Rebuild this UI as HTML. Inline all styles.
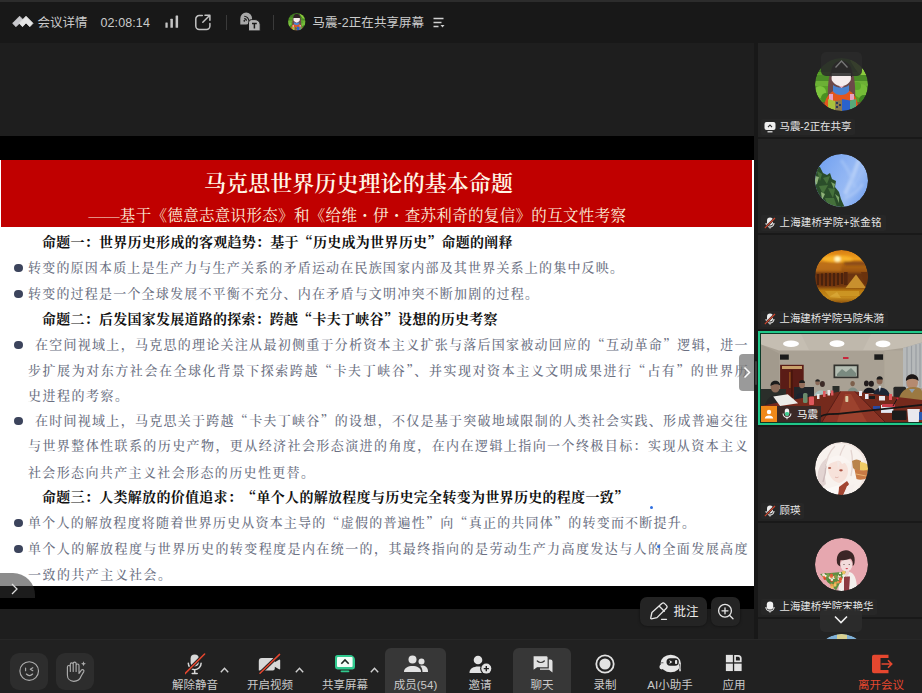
<!DOCTYPE html>
<html lang="zh-CN">
<head>
<meta charset="utf-8">
<title>腾讯会议</title>
<style>
*{box-sizing:border-box;margin:0;padding:0}
html,body{width:922px;height:693px;overflow:hidden;background:#181818}
body{position:relative;font-family:"Liberation Sans","Noto Sans CJK SC",sans-serif;color:#d2d2d2;font-size:12.5px}
.abs{position:absolute}
#topbar{left:0;top:0;width:922px;height:43px;background:#181818;border-top:2px solid #2c2c2c}
#topbar .t{position:absolute;top:12px;line-height:18px;font-size:12.5px;color:#cbcbcb;white-space:nowrap}
.sep{position:absolute;width:1px;background:#3a3a3a;top:13px;height:15px}
#stage{left:0;top:43px;width:754px;height:596px;background:#1e1e1e}
#blk{left:0;top:136px;width:754px;height:473px;background:#000}
#slide{left:0;top:160px;width:754px;height:426px;background:#fff;overflow:hidden}
#hdr{left:1px;top:0;width:750.500px;height:66.500px;background:#c00000}
.sl{position:absolute;white-space:nowrap;font-family:"Liberation Serif","Noto Serif CJK SC",serif;text-align:justify;text-align-last:justify;text-justify:inter-character}
.q{font-family:"Noto Serif CJK SC","Liberation Serif",serif;line-height:0}
.md{display:inline-block;width:1em;text-align:center;text-align-last:center;font-weight:900}
.h{font-weight:700;color:#111;font-size:14px;line-height:20px}
.b{font-weight:500;color:#6b7082;font-size:13px;line-height:20px}
.dot{position:absolute;width:8.400px;height:8.400px;border-radius:50%;background:#3c445c;left:14.200px}
#side{left:758px;top:43px;width:164px;height:596px;background:#191919;overflow:hidden}
.tile{position:absolute;left:0;width:164px;height:94px;background:#232323}
.av{position:absolute;left:57px;top:15px;width:53px;height:53px;border-radius:50%;overflow:hidden}
.nm{position:absolute;left:3px;top:76px;height:16px;background:#272727;border-radius:2px;font-size:10.450px;line-height:16px;color:#e6e6e6;padding:0 4px 0 18.500px;white-space:nowrap}
.nm svg{position:absolute;left:3px;top:2px}
#bar{left:0;top:639px;width:922px;height:54px;background:#212121;border-top:1px solid #272727}
.btn{position:absolute;top:12.5px;width:37.5px;height:37px;border-radius:9px;background:#2d2d2d}
.it{position:absolute;top:0;height:54px}
.it .lb{position:absolute;left:50%;transform:translateX(-50%);top:36.700px;font-size:11.5px;line-height:16px;color:#cacaca;white-space:nowrap}
.it svg{position:absolute}
.hl{position:absolute;top:8px;height:50px;border-radius:6px;background:#373737}
</style>
</head>
<body>
<div id="topbar" class="abs">
  <svg class="abs" style="left:12px;top:13px" width="22" height="13" viewBox="0 0 22 13" stroke-linejoin="round"><path d="M7.600 1.200L11 4.700L4 11.700L0.600 8.300Z" fill="#c9c9cd" stroke="#c9c9cd" stroke-width=".8"/><path d="M14 1.200L21 8.300L17.800 11.700L14 7.900L10.500 11.700L7.200 8.300Z" fill="#e6e6e6" stroke="#e6e6e6" stroke-width=".8"/></svg>
  <div class="t" style="left:37.500px">会议详情</div>
  <div class="t" style="left:100.500px;letter-spacing:.1px">02:08:14</div>
  <svg class="abs" style="left:165px;top:13px" width="15" height="14" viewBox="0 0 15 14"><rect x="0.400" y="7.400" width="2.300" height="5.400" rx=".5" fill="#c4c4c4"/><rect x="5.400" y="3.700" width="2.500" height="9.100" rx=".5" fill="#c4c4c4"/><rect x="10.600" y="0.500" width="2.500" height="12.300" rx=".5" fill="#c4c4c4"/></svg>
  <svg class="abs" style="left:194px;top:12px" width="18" height="17" viewBox="0 0 18 17" fill="none" stroke="#c2c2c2" stroke-width="1.500" stroke-linecap="round" stroke-linejoin="round"><path d="M8.300 1.600H5.200A3.400 3.400 0 0 0 1.800 5v7a3.400 3.400 0 0 0 3.400 3.400h7.300A3.400 3.400 0 0 0 15.900 12V9.500"/><path d="M8.800 8.300L15.800 1.300M11 1.200h4.900V6.200"/></svg>
  <div class="sep" style="left:226px"></div>
  <svg class="abs" style="left:240px;top:10px" width="21" height="20" viewBox="0 0 21 20"><path d="M0.300 12.400V6.500a5.900 5.900 0 1 1 5.900 5.900z" fill="#a9a9a9"/><path d="M4.200 6.600a2.200 2.200 0 0 1 2.200 2.200M4.200 4.200a4.600 4.600 0 0 1 4.600 4.600" stroke="#181818" stroke-width="1.100" fill="none"/><circle cx="4.300" cy="8.800" r="0.900" fill="#181818"/><path d="M8.500 18.900V10.600a3 3 0 0 1 3-3h3.500a5.200 5.200 0 0 1 5.200 5.200V18.900z" fill="#b2b2b2" stroke="#181818" stroke-width="1"/><path d="M12 11.500h4.800M14.400 11.500v5" stroke="#181818" stroke-width="1.500"/></svg>
  <div class="sep" style="left:273px"></div>
  <svg class="abs" style="left:288px;top:11.200px" width="17.500" height="17.500" viewBox="0 0 53 53"><use href="#av1"/></svg>
  <div class="t" style="left:312.500px;letter-spacing:.05px">马震-2正在共享屏幕</div>
  <svg class="abs" style="left:433px;top:15px" width="12" height="11" viewBox="0 0 12 11"><path d="M0.500 1.500h10M0.500 5.500h8M0.500 9.500h5" stroke="#d0d0d0" stroke-width="1.400"/><path d="M7.500 8l2 2.500l2-2.500z" fill="#d0d0d0"/></svg>
</div>

<div id="stage" class="abs"></div>
<div id="blk" class="abs"></div>
<div id="slide" class="abs">
  <div id="hdr" class="abs"></div>
  <div class="sl" style="left:204px;top:8.800px;width:309px;font-size:22px;line-height:30px;font-weight:600;color:#fff6e6">马克思世界历史理论的基本命题</div>
  <div class="sl" style="left:88.500px;top:45px;width:537.500px;font-size:15.500px;line-height:21px;color:#fdf0dc">——基于《德意志意识形态》和《给维<span class="q md">·</span>伊<span class="q md">·</span>查苏利奇的复信》的互文性考察</div>
  <div class="sl h" style="left:42px;top:72.6px;width:470.500px">命题一：世界历史形成的客观趋势：基于<span class="q">“</span>历史成为世界历史<span class="q">”</span>命题的阐释</div>
  <div class="sl b" style="left:28px;top:98px;width:595px">转变的原因本质上是生产力与生产关系的矛盾运动在民族国家内部及其世界关系上的集中反映。</div>
  <div class="dot" style="top:104px"></div>
  <div class="sl b" style="left:28px;top:124px;width:510px">转变的过程是一个全球发展不平衡不充分、内在矛盾与文明冲突不断加剧的过程。</div>
  <div class="dot" style="top:130px"></div>
  <div class="sl h" style="left:42px;top:149.6px;width:455.5px">命题二：后发国家发展道路的探索：跨越<span class="q">“</span>卡夫丁峡谷<span class="q">”</span>设想的历史考察</div>
  <div class="sl b" style="left:35px;top:174.5px;width:712.5px">在空间视域上，马克思的理论关注从最初侧重于分析资本主义扩张与落后国家被动回应的<span class="q">“</span>互动革命<span class="q">”</span>逻辑，进一</div>
  <div class="dot" style="top:180.5px"></div>
  <div class="sl b" style="left:28px;top:200.5px;width:719.5px">步扩展为对东方社会在全球化背景下探索跨越<span class="q">“</span>卡夫丁峡谷<span class="q">”</span>、并实现对资本主义文明成果进行<span class="q">“</span>占有<span class="q">”</span>的世界历</div>
  <div class="sl b" style="left:28px;top:225.5px;width:100px">史进程的考察。</div>
  <div class="sl b" style="left:35px;top:251px;width:712.5px">在时间视域上，马克思关于跨越<span class="q">“</span>卡夫丁峡谷<span class="q">”</span>的设想，不仅是基于突破地域限制的人类社会实践、形成普遍交往</div>
  <div class="dot" style="top:257px"></div>
  <div class="sl b" style="left:28px;top:276px;width:719.5px">与世界整体性联系的历史产物，更从经济社会形态演进的角度，在内在逻辑上指向一个终极目标：实现从资本主义</div>
  <div class="sl b" style="left:28px;top:302.5px;width:286px">社会形态向共产主义社会形态的历史性更替。</div>
  <div class="sl h" style="left:42px;top:328.1px;width:586px">命题三：人类解放的价值追求：<span class="q">“</span>单个人的解放程度与历史完全转变为世界历史的程度一致<span class="q">”</span></div>
  <div class="sl b" style="left:28px;top:353px;width:667px">单个人的解放程度将随着世界历史从资本主导的<span class="q">“</span>虚假的普遍性<span class="q">”</span>向<span class="q">“</span>真正的共同体<span class="q">”</span>的转变而不断提升。</div>
  <div class="dot" style="top:359px"></div>
  <div class="sl b" style="left:28px;top:378.5px;width:719.5px">单个人的解放程度与世界历史的转变程度是内在统一的，其最终指向的是劳动生产力高度发达与人的全面发展高度</div>
  <div class="dot" style="top:384.5px"></div>
  <div class="sl b" style="left:28px;top:404.5px;width:143px">一致的共产主义社会。</div>

  <div class="abs" style="left:739px;top:194px;width:15px;height:37px;border-radius:4px 0 0 4px;background:rgba(120,120,120,.75)"><svg class="abs" style="left:4px;top:12px" width="8" height="13" viewBox="0 0 8 13" fill="none" stroke="#fff" stroke-width="1.500"><path d="M1.500 1.500L6.500 6.500L1.500 11.500"/></svg></div>
</div>
<div class="abs" style="left:0;top:572.500px;width:35px;height:25px;border-radius:0 22px 0 0;background:rgba(50,50,50,.56)"><svg class="abs" style="left:11px;top:10px" width="7" height="12" viewBox="0 0 7 12" fill="none" stroke="#ddd" stroke-width="1.300"><path d="M1 1L6 6L1 11"/></svg></div>

<div class="abs" style="left:640px;top:597px;width:66.500px;height:29px;border-radius:7px;background:#242424;box-shadow:0 0 3px rgba(0,0,0,.5)"><svg class="abs" style="left:9px;top:5px" width="20" height="19" viewBox="0 0 20 19" fill="none" stroke="#e6e6e6" stroke-width="1.300" stroke-linejoin="round" stroke-linecap="round"><path d="M12.800 1.600a2 2 0 0 1 2.800 0l1.800 1.800a2 2 0 0 1 0 2.800L8 15.600l-5.600 1.200a.6.600 0 0 1-.7-.7L2.900 10.500z"/><path d="M10.300 4.200l5 5"/><path d="M12.500 17.300h5"/></svg><div class="abs" style="left:33.500px;top:6px;font-size:12.500px;line-height:18px;color:#eaeaea;white-space:nowrap">批注</div></div>
<div class="abs" style="left:711px;top:597px;width:29px;height:29px;border-radius:7px;background:#242424;box-shadow:0 0 3px rgba(0,0,0,.5)"><svg class="abs" style="left:5px;top:5px" width="20" height="20" viewBox="0 0 20 20" fill="none" stroke="#e6e6e6" stroke-width="1.300" stroke-linecap="round"><circle cx="9" cy="8.800" r="6.400"/><path d="M13.700 13.500l3.300 3.300M6 8.800h6M9 5.800v6"/></svg></div>
<div class="abs" style="left:755px;top:361px;width:2px;height:24px;border-radius:1px;background:#3c3c3c"></div>
<div class="abs" style="left:650px;top:506px;width:3px;height:3px;border-radius:50%;background:#2f6fe0"></div>
<div class="abs" style="left:657px;top:545px;width:3px;height:3px;border-radius:50%;background:#2f6fe0"></div>
<div id="side" class="abs">
  <svg width="0" height="0" style="position:absolute"><defs>
    <clipPath id="cc"><circle cx="26.500" cy="26.500" r="26.500"/></clipPath>
    <filter id="b1" x="-10%" y="-10%" width="120%" height="120%"><feGaussianBlur stdDeviation="0.750"/></filter>
    <filter id="b2" x="-10%" y="-10%" width="120%" height="120%"><feGaussianBlur stdDeviation="1.200"/></filter>
    <filter id="b3" x="-20%" y="-20%" width="140%" height="140%"><feGaussianBlur stdDeviation="2.500"/></filter>
    <symbol id="av1" viewBox="0 0 53 53"><g clip-path="url(#cc)"><g filter="url(#b1)">
      <rect width="53" height="53" fill="#58a028"/>
      <rect x="0" y="0" width="53" height="14" fill="#3f7a20"/>
      <path d="M34 0h19v22c-6-2-12-8-19-22z" fill="#8ccc3c"/>
      <rect x="0" y="17" width="53" height="6" fill="#4c8c26"/>
      <rect x="0" y="23" width="53" height="5" fill="#6cb034"/>
      <circle cx="5" cy="34" r="6" fill="#7cc43c"/><circle cx="11" cy="40" r="5" fill="#4a9022"/><circle cx="46" cy="33" r="7" fill="#74bc38"/><circle cx="49" cy="42" r="5" fill="#3f8420"/><circle cx="42" cy="28" r="4" fill="#5ca82c"/>
      <path d="M0 44h53v9H0z" fill="#6a5a30"/>
      <path d="M13 42C12 22 15 3 26.500 3s14.500 19 13.500 39z" fill="#6c4a4a"/>
      <path d="M16 19C15 8 20 3 26.500 3S38 8 37 19z" fill="#2e2226"/>
      <path d="M16.600 15h19.300v6c0 3-5 7-9.600 7.400c-4.600-.4-9.700-4.400-9.700-7.400z" fill="#f6ecec"/>
      <path d="M8.500 53C9 40 15 31 26.500 31S43 40 43.500 53z" fill="#e2571f"/>
      <path d="M14 36h4v7h-4zM35 36h4v6h-4z" fill="#e8a2c2"/>
      <path d="M18 27c3 2 5 2.500 8 2.500s6-.500 8-2.500v6.500c-2 2.500-5 3.500-8 3.500s-6-1-8-3.500z" fill="#4a82d0"/>
      <path d="M24 28h5l-2.500 2z" fill="#f0b8c8"/>
      <path d="M13 41l7 2v10h-7z" fill="#a9c23e"/><path d="M20 43l7-1v11h-7z" fill="#8a7a50"/><path d="M27 41l8 1.500V53h-8z" fill="#2a62cc"/><path d="M35 42.500l6-1.500v9l-6 2z" fill="#58a878"/>
      <path d="M21 44h2v2h-2zM24 46h2v2h-2zM21 48h2v2h-2z" fill="#2a3a5a"/>
    </g></g></symbol>
    <symbol id="micoff" viewBox="0 0 12 12"><rect x="3" y="0.600" width="6" height="7.800" rx="3" fill="#ececec"/><path d="M2 6a4 4 0 0 0 8 0M6 10v1.500" stroke="#ececec" stroke-width="1.100" fill="none"/><path d="M0.800 11.200L11 1" stroke="#282828" stroke-width="2.200"/><path d="M0.800 11.200L11 1" stroke="#d2452c" stroke-width="1.100"/></symbol>
    <symbol id="micon" viewBox="0 0 12 12"><rect x="2.800" y="0.400" width="6.400" height="8.200" rx="3.200" fill="#f2f2f2"/><path d="M1.900 6a4.100 4.100 0 0 0 8.200 0M6 10v1.600" stroke="#f2f2f2" stroke-width="1.100" fill="none"/></symbol>
  </defs></svg>

  <!-- tile 1 -->
  <div class="tile" style="top:0">
    <svg class="av" viewBox="0 0 53 53"><use href="#av1"/></svg>
    <div class="abs" style="left:63px;top:9px;width:41px;height:24px;border-radius:5px;background:rgba(42,42,42,.88)"><svg class="abs" style="left:14px;top:8px" width="13" height="8" viewBox="0 0 13 8" fill="none" stroke="#777" stroke-width="1.300"><path d="M0.500 7.500L6.500 1L12.500 7.500"/></svg></div>
    <div class="nm"><svg width="12" height="12" viewBox="0 0 12 12"><rect x="0.500" y="1" width="11" height="8" rx="2" fill="#f0f0f0"/><path d="M4 6.200L6 4l2 2.200" stroke="#2b2b2b" stroke-width="1.100" fill="none"/><path d="M3.500 10.800h5" stroke="#f0f0f0" stroke-width="1.200"/></svg>马震-2正在共享</div>
  </div>

  <!-- tile 2 -->
  <div class="tile" style="top:96px">
    <svg class="av" viewBox="0 0 53 53"><defs><linearGradient id="sky" x1="0" y1="0" x2="1" y2="0.600"><stop offset="0" stop-color="#6c9df0"/><stop offset="0.550" stop-color="#8fb4f3"/><stop offset="0.800" stop-color="#9cbdf4"/><stop offset="1" stop-color="#7fa9f0"/></linearGradient></defs><g clip-path="url(#cc)">
      <rect width="53" height="53" fill="url(#sky)"/>
      <g filter="url(#b2)"><path d="M44 6C40 18 36 28 30 40" stroke="#bcd3f8" stroke-width="4" fill="none" opacity=".75"/><path d="M26 6C32 14 36 20 40 34" stroke="#a8c6f6" stroke-width="3" fill="none" opacity=".6"/><path d="M30 44C36 42 42 38 48 30" stroke="#b4cef7" stroke-width="3" fill="none" opacity=".5"/></g>
      <g filter="url(#b1)"><path d="M-2 12L5 13L8 19L12 21L15 19L17 25L21 27L20 33L24 38L26 45L30 54L-2 54Z" fill="#2c4e2a"/>
      <g filter="url(#b1)" opacity=".8"><path d="M2 17L7 20L5 27zM8 24l7-2l-3 8zM4 32l9-1l-5 9zM13 34l7 1l-2 9zM10 44l9 0l3 9h-9z" fill="#4c7a40"/></g><path d="M0 22l4 1l-2 7l-2 1zM6 38l4 2l-3 6z" fill="#8fb27a"/><path d="M16 28l4 2l-1 5zM20 40l4 3l0 6z" fill="#7aa468"/></g>
    </g></svg>
    <div class="nm" style="letter-spacing:.2px"><svg width="12" height="12"><use href="#micoff"/></svg>上海建桥学院+张金铭</div>
  </div>

  <!-- tile 3 -->
  <div class="tile" style="top:192px">
    <svg class="av" viewBox="0 0 53 53"><defs><linearGradient id="sun" x1="0" y1="0" x2="0" y2="1"><stop offset="0" stop-color="#d67c14"/><stop offset="0.170" stop-color="#f0a01c"/><stop offset="0.260" stop-color="#b86a14"/><stop offset="0.400" stop-color="#9a5410"/><stop offset="0.460" stop-color="#6a3410"/><stop offset="0.680" stop-color="#74380e"/><stop offset="0.760" stop-color="#b8780f"/><stop offset="0.900" stop-color="#c48a1c"/><stop offset="1" stop-color="#8e520c"/></linearGradient></defs><g clip-path="url(#cc)">
      <rect width="53" height="53" fill="url(#sun)"/>
      <g filter="url(#b2)"><ellipse cx="22.500" cy="9" rx="15" ry="3.200" fill="#f8b42c"/><circle cx="22.500" cy="9" r="3" fill="#fff6c0"/><path d="M28 11.500h25v4H30z" fill="#8a4c12"/><path d="M0 13h26v8H0z" fill="#c07418" opacity=".7"/></g>
      <g filter="url(#b1)"><path d="M3 24v11M7 23.500v12M11 23v13M15 23v13M19 23v13M23 23v12M27 23v11" stroke="#4a200c" stroke-width="2.200"/><path d="M30.500 38L41 24.500L51 38Z" fill="#c8902e"/><rect x="29" y="22" width="3.600" height="13" fill="#54280e"/><path d="M46 22h7v12h-4z" fill="#6a300e"/><path d="M10 41h34v5H14z" fill="#d09a28" opacity=".8"/><path d="M14 47l8-5l4 6z" fill="#e0b040" opacity=".6"/></g>
    </g></svg>
    <div class="nm"><svg width="12" height="12"><use href="#micoff"/></svg>上海建桥学院马院朱漪</div>
  </div>

  <!-- tile 4 video -->
  <div class="tile" style="top:288px;background:#20c789">
    <div class="abs" style="left:2px;top:2px;right:0;bottom:2px;background:#0c3a28"></div>
    <svg class="abs" style="left:3px;top:3px" width="161" height="88" viewBox="0 0 161 88"><g filter="url(#b1)">
      <rect width="161" height="88" fill="#a9a194"/>
      <path d="M0 0H161V8.500L142 14L123 16.500H18L0 10.400Z" fill="#c5beb2"/>
      <path d="M40 0h70l-8 16H48z" fill="#bbb4a8" opacity=".6"/>
      <path d="M0 10.400L18 19.400V62H0Z" fill="#a29a8d"/>
      <rect x="123.400" y="16.500" width="18.600" height="46" fill="#b1a99b"/>
      <path d="M142 14L161 8.500V54H142Z" fill="#b6b9ba"/>
      <path d="M146 13v40M150.500 12v41M155 10.500v43M159 9.500v44" stroke="#9a9ea2" stroke-width="1.200"/>
      <ellipse cx="30" cy="9.700" rx="8" ry="3.200" fill="#fff"/><ellipse cx="76" cy="9.700" rx="7.500" ry="3.400" fill="#fff"/><ellipse cx="122" cy="9.900" rx="7.500" ry="3.400" fill="#fff"/>
      <rect x="19" y="20.500" width="8.800" height="5.200" fill="#1e1f1c"/><rect x="113.300" y="20.300" width="8.800" height="5.500" fill="#1e1f1c"/><rect x="82" y="23" width="5.500" height="2" fill="#c8283a"/>
      <rect x="19.100" y="30.800" width="23.600" height="34" fill="#5a1d14"/><rect x="21" y="32" width="20" height="3" fill="#c9a06a"/><rect x="30.400" y="36" width="1" height="28" fill="#3a0f09"/><rect x="28" y="38" width="1.600" height="16" fill="#8a4a1e"/>
      <rect x="72.500" y="30.500" width="25" height="13.700" fill="#33332e"/><rect x="74.200" y="32.200" width="21.600" height="10.300" fill="#b4bdb2"/><path d="M76 40l5-5l4 3l5-4l5 5v3H76z" fill="#7a8a80"/>
      <!-- chairs / people left -->
      <path d="M0 55h25v22H0z" fill="#2b2f2b"/>
      <path d="M33 53h20v13H33z" fill="#24282a"/>
      <ellipse cx="14.300" cy="53" rx="4.600" ry="5.600" fill="#8a6a58"/><path d="M9.500 52c-.5-7 10-7 9.600-.5c-2-1.500-6-2-9.600.5z" fill="#1a1a1a"/>
      <path d="M3 76c1-12 8-15 13-15s9 4 11 10l-8 8H3z" fill="#262626"/>
      <ellipse cx="41" cy="50.500" rx="3" ry="3.800" fill="#94705c"/><path d="M38 49c0-4 6-4 6 0z" fill="#1c1c1c"/><path d="M34 66c1-10 13-10 15 0z" fill="#1c222e"/>
      <ellipse cx="56.600" cy="48.500" rx="2.300" ry="2.800" fill="#8a6a58"/><path d="M54.300 47.500c0-3 4.600-3 4.600 0z" fill="#222"/>
      <ellipse cx="61.400" cy="50" rx="2.500" ry="3" fill="#3a2c28"/>
      <path d="M53 64c0-10 14-10 14 0z" fill="#a9c1bf"/>
      <rect x="71.500" y="52" width="7" height="7" fill="#2a2d2a"/>
      <ellipse cx="91.600" cy="49.600" rx="2.200" ry="2.700" fill="#7c5e4c"/><path d="M86.500 58c1-6 9.500-6 10.500 0z" fill="#7f8f86"/>
      <ellipse cx="105.400" cy="49.400" rx="2.400" ry="2.800" fill="#221c1c"/><ellipse cx="110.300" cy="49.800" rx="2.600" ry="3" fill="#221c1c"/><path d="M102 59c1-7 11-7 13 0z" fill="#17171a"/>
      <ellipse cx="118.600" cy="46.800" rx="3" ry="3.800" fill="#8a6652"/><path d="M115.500 45.500c0-4.500 6.400-4.500 6.400 0z" fill="#1a1a1a"/><path d="M112 62c1-11 15-11 17 0z" fill="#1e2636"/><path d="M117.500 52l1.300 6l1.300-6z" fill="#cdd6e0"/>
      <rect x="132.400" y="52.800" width="12.600" height="12" rx="1.500" fill="#262826"/>
      <ellipse cx="151.200" cy="48.500" rx="5.800" ry="6.800" fill="#b58a70"/><path d="M145 47c-1-9 13-9 12.500 0c-3-3-9-3-12.500 0z" fill="#1d1714"/>
      <path d="M137 70c1-14 10-17 16-17s8 3 8 5v12z" fill="#9b7942"/><path d="M148 55l3 4l3-4z" fill="#8fa0b0"/>
      <!-- tables -->
      <path d="M0 72L30 66L79.500 57.500H94L128 62L161 66V88H0Z" fill="#742a1e"/>
      <path d="M79.500 57.500H94L124 88H61Z" fill="#8c3525"/><path d="M84 60h6l16 28H76z" fill="#a04630" opacity=".8"/>
      <path d="M79.500 57.500L61 88" stroke="#5a1e16" stroke-width="1"/><path d="M94 57.500L124 88" stroke="#5a1e16" stroke-width="1"/>
      <path d="M12.200 62.400L26.800 60.300L37.100 69.300L19.100 72Z" fill="#ecece8"/>
      <rect x="42" y="59" width="4.500" height="10" rx="1.500" fill="#6b8c6c"/><rect x="48" y="62.400" width="5" height="8.600" rx="1" fill="#e0585c"/>
      <rect x="56" y="60" width="2.500" height="5" fill="#ece6e6"/><rect x="62" y="57" width="2.600" height="6" fill="#e05c60"/><rect x="66.500" y="56" width="2.500" height="5.500" fill="#ece6e6"/><rect x="70" y="56.500" width="2.400" height="5" fill="#dc5a5e"/>
      <rect x="84.300" y="62" width="3" height="6" rx=".8" fill="#d9cba4"/>
      <rect x="98" y="57" width="3" height="5" fill="#e6e8f0"/><rect x="104" y="60" width="3.500" height="5" fill="#e6e8f0"/><rect x="108" y="62" width="6" height="3" fill="#1c1c1e"/><rect x="118" y="62" width="6" height="4.500" fill="#e8e8ee"/><rect x="128" y="60" width="3" height="6" fill="#e4565a"/>
      <rect x="120" y="70.900" width="12.400" height="8" fill="#e4e8f2"/><rect x="121" y="70" width="13" height="3" fill="#c83c48"/><rect x="112" y="72" width="7" height="3" fill="#2a4aa0"/>
      <rect x="131" y="76.400" width="14.600" height="9.600" rx="1" fill="#1b1b1c"/><path d="M146.300 75h12.500l-1 13h-10.500z" fill="#e9e9ee"/><rect x="158" y="78" width="3" height="8" fill="#2a5ab0"/>
      <path d="M57 88C57 80 66 80 77 79.900L161 70.900" stroke="#161616" stroke-width="1.600" fill="none"/><path d="M132 72l4-7" stroke="#161616" stroke-width="1"/><circle cx="136.500" cy="64.500" r="1" fill="#d02040"/>
    </g></svg>
    <div class="abs" style="left:3px;top:75px;width:16px;height:16px;background:#f0891a"><svg class="abs" style="left:3px;top:3px" width="10" height="10" viewBox="0 0 10 10"><circle cx="5" cy="3" r="2.200" fill="#fff"/><path d="M0.800 9.500c0-4 8.400-4 8.400 0z" fill="#fff"/></svg></div>
    <div class="abs" style="left:19px;top:75px;width:44px;height:16px;background:rgba(46,42,40,.82);font-size:10.500px;line-height:16px;color:#f4f4f4;padding-left:20px;white-space:nowrap"><svg class="abs" style="left:4px;top:2px" width="12" height="12" viewBox="0 0 12 12"><rect x="3.800" y="0.600" width="4.400" height="7.200" rx="2.200" fill="#f2f2f2"/><rect x="3.800" y="4" width="4.400" height="3.800" rx="1.800" fill="#3ec98e"/><path d="M2.100 5.500a3.900 3.900 0 0 0 7.800 0M6 9.400v1.900" stroke="#f2f2f2" stroke-width="1.100" fill="none"/></svg>马震</div>
  </div>

  <!-- tile 5 -->
  <div class="tile" style="top:384px">
    <svg class="av" viewBox="0 0 53 53"><g clip-path="url(#cc)"><g filter="url(#b1)">
      <rect width="53" height="53" fill="#f1e5e0"/>
      <path d="M0 22C4 6 18 0 30 2s22 12 20 30L42 50H4Z" fill="#f8f2ee"/>
      <path d="M3 30c2-8 6-12 9-14c-2 8-3 16-1 26l-5 4c-3-5-4-10-3-16z" fill="#e2d4d2"/>
      <path d="M8 40c2-6 3-12 3-18" stroke="#cdbcbc" stroke-width="1.400" fill="none"/>
      <path d="M20 4c-6 6-9 14-9 22M30 3c-4 6-6 12-6 18M36 8c2 8 2 16 0 26" stroke="#e3d4d0" stroke-width="1.300" fill="none"/>
      <path d="M13 26c1-6 6-9 11-8s9 5 9 11c0 6-4 11-9 12c-6-1-11-8-11-15z" fill="#f7e2da"/>
      <path d="M11 24C14 12 28 9 36 22c-3-2-6-2-9 0c-1-3-3-4-5-3c-3 1-7 2-11 5z" fill="#faf5f2"/>
      <path d="M22 19l1 8l2-7z" fill="#f3e8e4"/>
      <ellipse cx="14.600" cy="26" rx="1.600" ry="1" fill="#b2604e"/><ellipse cx="26" cy="28.300" rx="1.800" ry="1.100" fill="#ac5444"/>
      <path d="M20 35c1 .8 2.500 .8 3.500 0" stroke="#d8a098" stroke-width=".7" fill="none"/>
      <path d="M37 19c3-2 6-2 9 0v9c-3 1-6 0-8-2z" fill="#b9844c"/><path d="M45 20c3 0 6 1 8 3v7c-3 0-6-1-8-2z" fill="#f0cc66"/><path d="M39.500 27c4 1 8 2 13 1v8c-4 2-8 2-11 1z" fill="#c97a44"/><path d="M41 32l10 2" stroke="#e8b070" stroke-width="1"/>
      <path d="M24 45l8-6l2 3l-6 11h-5z" fill="#a24530"/><path d="M8 48l16-5l-1 10H8z" fill="#fcf9f7"/><path d="M32 44l8-2l-4 10l-8 2z" fill="#f6efec"/>
    </g></g></svg>
    <div class="nm"><svg width="12" height="12"><use href="#micoff"/></svg>顾瑛</div>
  </div>

  <!-- tile 6 -->
  <div class="tile" style="top:480px">
    <svg class="av" viewBox="0 0 53 53"><g clip-path="url(#cc)"><g filter="url(#b1)">
      <rect width="53" height="53" fill="#e6a7af"/>
      <path d="M23.500 53C23.500 41 26 35 32 34s10 4 10 19z" fill="#f3efec"/><path d="M29 38.500h6l-1 14.500h-5z" fill="#8c3a42"/>
      <path d="M28.500 31h5.500v5l-2.700 2.500l-2.800-2.500z" fill="#efd2d0"/>
      <ellipse cx="31.400" cy="27" rx="6" ry="6.200" fill="#f3dcdc"/>
      <path d="M22 25C20.500 15 27 11.800 31.500 12.200s9.500 4.300 8 12.800c-.3 1.500-1 2.500-1.800 3c.5-4-.5-6.500-2.500-7.500c-3 1.500-6.500 2-9.500 1.500c-.8 2-.8 4-.3 6.500c-1.800-.8-3-2-3.400-3.500z" fill="#3a2826"/>
      <ellipse cx="31.800" cy="30.600" rx="1.300" ry="0.650" fill="#d04050"/><circle cx="29" cy="26.500" r=".55" fill="#4a3430"/><circle cx="34.200" cy="26.500" r=".55" fill="#4a3430"/>
      <path d="M5 36L31 33.500L21 52.500Z" fill="#5f8f42"/>
      <circle cx="12.7" cy="37.2" r="1.7" fill="#7aa04a"/><circle cx="10.0" cy="36.8" r="1.7" fill="#4f8436"/><circle cx="10.1" cy="39.0" r="1.1" fill="#f0c060"/><circle cx="23.9" cy="40.7" r="1.3" fill="#f2ead8"/><circle cx="25.1" cy="35.4" r="1.1" fill="#f4f0e4"/><circle cx="28.7" cy="37.5" r="1.5" fill="#f4f0e4"/><circle cx="18.7" cy="39.5" r="1.5" fill="#f2ead8"/><circle cx="19.0" cy="46.3" r="1.7" fill="#4f8436"/><circle cx="15.2" cy="39.5" r="1.5" fill="#f2ead8"/><circle cx="9.2" cy="38.8" r="1.5" fill="#e8743a"/><circle cx="13.8" cy="42.7" r="1.5" fill="#4f8436"/><circle cx="16.4" cy="42.4" r="1.5" fill="#d8482e"/><circle cx="20.2" cy="38.8" r="1.5" fill="#e8743a"/><circle cx="14.0" cy="43.2" r="1.5" fill="#4f8436"/><circle cx="25.0" cy="43.5" r="1.5" fill="#e05a3a"/><circle cx="17.1" cy="48.9" r="1.7" fill="#f0c060"/><circle cx="22.9" cy="44.2" r="1.3" fill="#e89a50"/><circle cx="25.8" cy="41.5" r="1.3" fill="#e89a50"/><circle cx="8.5" cy="36.8" r="1.3" fill="#f4f0e4"/><circle cx="16.9" cy="41.7" r="1.3" fill="#f2ead8"/><circle cx="16.3" cy="38.2" r="1.7" fill="#e8743a"/><circle cx="16.6" cy="47.1" r="1.5" fill="#e89a50"/><circle cx="9.8" cy="40.6" r="1.3" fill="#d8482e"/><circle cx="10.6" cy="37.8" r="1.1" fill="#f4f0e4"/><circle cx="16.5" cy="36.9" r="1.5" fill="#e05a3a"/><circle cx="20.5" cy="45.1" r="1.3" fill="#e89a50"/><circle cx="25.4" cy="40.7" r="1.7" fill="#e05a3a"/><circle cx="24.4" cy="37.9" r="1.5" fill="#f6dcd0"/><circle cx="28.7" cy="34.5" r="1.7" fill="#f0c060"/><circle cx="8.9" cy="36.8" r="1.3" fill="#f6dcd0"/><circle cx="24.8" cy="37.0" r="1.1" fill="#4f8436"/><circle cx="21.5" cy="39.0" r="1.1" fill="#f2ead8"/><circle cx="19.9" cy="47.0" r="1.7" fill="#f0c060"/><circle cx="21.0" cy="38.9" r="1.7" fill="#7aa04a"/>
    </g></g></svg>
    <div class="nm"><svg width="12" height="12"><use href="#micon"/></svg>上海建桥学院宋艳华</div>
  </div>

  <!-- tile 7 -->
  <div class="tile" style="top:576px">
    <svg class="av" viewBox="0 0 53 53"><g clip-path="url(#cc)"><rect width="53" height="53" fill="#7fb0d6"/><rect x="22" y="0" width="10" height="6" fill="#d8d090"/></g></svg>
  </div>
  <div class="abs" style="left:62px;top:566px;width:42px;height:23px;border-radius:5px;background:rgba(44,44,44,.92)"><svg class="abs" style="left:14px;top:5.500px" width="14" height="9" viewBox="0 0 14 9" fill="none" stroke="#f0f0f0" stroke-width="1.600"><path d="M1 1.500L7 7.500L13 1.500"/></svg></div>
</div>


<div id="bar" class="abs">
  <div class="btn" style="left:10px"><svg class="abs" style="left:8px;top:7.300px" width="22" height="22" viewBox="0 0 22 22" fill="none" stroke="#adadad" stroke-width="1.150" stroke-linecap="round" stroke-linejoin="round"><circle cx="11.200" cy="11" r="9.300"/><path d="M7.600 8.100v2.600"/><path d="M14.800 7.700L12.300 9.200L14.800 10.700"/><path d="M8.400 14Q11.500 17.300 14.600 14"/></svg></div>
  <div class="btn" style="left:56px"><svg class="abs" style="left:8px;top:7px" width="24" height="24" viewBox="0 0 24 24" fill="none" stroke="#adadad" stroke-width="1.150" stroke-linecap="round" stroke-linejoin="round"><path d="M3.400 15V6.900a1.450 1.450 0 0 1 2.900 0V11.500M6.300 11.500V4.300a1.450 1.450 0 0 1 2.900 0V11.500M9.200 11.500V3.500a1.450 1.450 0 0 1 2.900 0V11.500M12.100 11.500V5.400a1.450 1.450 0 0 1 2.900 0V13.500L17.400 10.200a1.400 1.400 0 0 1 2.400 1.400L17.200 16C16 19.500 13 21.300 9.800 21.300C5.800 21.300 3.400 18.500 3.400 15"/><path d="M19.500 1.200L20.200 3L22 3.700L20.200 4.400L19.500 6.200L18.800 4.400L17 3.700L18.800 3z" fill="#adadad" stroke="none"/></svg></div>

  <div class="it" style="left:165px;width:60px">
    <svg style="left:20px;top:11px" width="22" height="26" viewBox="0 0 22 26"><rect x="5.600" y="3.400" width="8.200" height="12" rx="4.100" fill="#d8d8d8"/><path d="M3.300 12.300a6.400 6.400 0 0 0 12.800 0M9.700 19v3.300M7.200 22.500h5" stroke="#d8d8d8" stroke-width="1.500" fill="none" stroke-linecap="round"/><path d="M0 22.600L19.600 3" stroke="#212121" stroke-width="3.400"/><path d="M0 22.600L19.600 3" stroke="#e5462f" stroke-width="1.500" stroke-linecap="round"/></svg>
    <div class="lb">解除静音</div>
  </div>
  <svg class="abs" style="left:220px;top:27px" width="9" height="6" viewBox="0 0 9 6" fill="none" stroke="#d0d0d0" stroke-width="1.400"><path d="M0.800 5.200L4.500 1.200L8.200 5.200"/></svg>

  <div class="it" style="left:240px;width:60px">
    <svg style="left:17px;top:11px" width="26" height="26" viewBox="0 0 26 26"><path d="M1.800 10a3 3 0 0 1 3-3h11a2 2 0 0 1 2 2v2.300l4.200-2.600a0.800 0.800 0 0 1 1.200 0.700v8.200a0.800 0.800 0 0 1-1.200 0.700l-4.200-2.600V17.600a2 2 0 0 1-2 2H1.800z" fill="#d8d8d8"/><path d="M3 22.300L22.600 3.400" stroke="#212121" stroke-width="3.400"/><path d="M3 22.300L22.600 3.400" stroke="#e5462f" stroke-width="1.500" stroke-linecap="round"/></svg>
    <div class="lb">开启视频</div>
  </div>
  <svg class="abs" style="left:295px;top:27px" width="9" height="6" viewBox="0 0 9 6" fill="none" stroke="#d0d0d0" stroke-width="1.400"><path d="M0.800 5.200L4.500 1.200L8.200 5.200"/></svg>

  <div class="it" style="left:315px;width:60px">
    <svg style="left:19px;top:12px" width="22" height="22" viewBox="0 0 22 22"><path d="M3.500 3H16a5 5 0 0 1 5 5v7a2.400 2.400 0 0 1-2.400 2.400H3.400A2.400 2.400 0 0 1 1 15V5.500A2.500 2.500 0 0 1 3.500 3z" fill="#2fc98e"/><rect x="3" y="5" width="15.600" height="10" rx="1" fill="#f4fff9"/><path d="M7.300 11.800L11 8l3.700 3.800" stroke="#1d2a24" stroke-width="1.600" fill="none"/><path d="M7.500 19.300h7" stroke="#2fc98e" stroke-width="1.800" stroke-linecap="round"/></svg>
    <div class="lb">共享屏幕</div>
  </div>
  <svg class="abs" style="left:370px;top:27px" width="9" height="6" viewBox="0 0 9 6" fill="none" stroke="#d0d0d0" stroke-width="1.400"><path d="M0.800 5.200L4.500 1.200L8.200 5.200"/></svg>

  <div class="hl" style="left:385px;width:61px"></div>
  <div class="it" style="left:385px;width:61px">
    <svg style="left:18px;top:15px" width="26" height="18" viewBox="0 0 26 18" fill="#e2e2e2"><circle cx="9.500" cy="4.500" r="4"/><path d="M1 16.500c0-7.500 17-7.500 17 0v0.500H1z"/><circle cx="18.500" cy="6.500" r="3"/><path d="M19.500 17c0-3-1-5-2.500-6.200c4-1 8 1 8 5.200v1z"/></svg>
    <div class="lb">成员(54)</div>
  </div>

  <div class="it" style="left:450px;width:60px">
    <svg style="left:18px;top:14.500px" width="26" height="20" viewBox="0 0 26 20"><circle cx="10" cy="5" r="4.300" fill="#e2e2e2"/><path d="M1.500 17.500c0-8 17-8 17 0v0.500h-17z" fill="#e2e2e2"/><circle cx="18.300" cy="13.600" r="6.200" fill="#212121"/><circle cx="18.300" cy="13.600" r="5" fill="#e2e2e2"/><path d="M15.700 13.600h5.200M18.300 11v5.200" stroke="#212121" stroke-width="1.400"/></svg>
    <div class="lb">邀请</div>
  </div>

  <div class="hl" style="left:513px;width:58px"></div>
  <div class="it" style="left:513px;width:58px">
    <svg style="left:18px;top:14px" width="24" height="22" viewBox="0 0 24 22"><path d="M9 5.500h10.500a2 2 0 0 1 2 2V18.500l-3.500-2.700H9z" fill="#e2e2e2"/><path d="M2 1.600h13.200a2 2 0 0 1 2 2V13.800H6.200L2 17z" fill="#e2e2e2" stroke="#373737" stroke-width="1.200"/><path d="M6.300 7c2 1.800 5 1.800 7 0" stroke="#373737" stroke-width="1.300" fill="none" stroke-linecap="round"/></svg>
    <div class="lb">聊天</div>
  </div>

  <div class="it" style="left:575px;width:60px">
    <svg style="left:20px;top:14px" width="20" height="20" viewBox="0 0 20 20"><circle cx="10" cy="10" r="8.700" fill="none" stroke="#e2e2e2" stroke-width="1.800"/><circle cx="10" cy="10" r="5.600" fill="#e2e2e2"/></svg>
    <div class="lb">录制</div>
  </div>

  <div class="it" style="left:640px;width:60px">
    <svg style="left:18.500px;top:14px" width="24" height="20" viewBox="0 0 24 20"><ellipse cx="11.700" cy="9.500" rx="10.200" ry="8.800" fill="#e6e6e6"/><circle cx="2.800" cy="13" r="2.400" fill="#e6e6e6"/><path d="M19.500 8c2.500 2 3 5.500 2.300 8.800c-.3.800-1.300.8-1.500 0c-.3-2-.8-3.500-1.800-5z" fill="#e6e6e6"/><path d="M19.900 9.500c1 2 1.300 3.800 1.200 6" stroke="#212121" stroke-width=".7" fill="none"/><path d="M1.200 9.300c1.200-.6 2.200-.7 3.200-.5" stroke="#212121" stroke-width=".7" fill="none"/><rect x="7.500" y="4.200" width="12.300" height="7.600" rx="3.700" fill="#212121"/><path d="M10.200 5.900l3.200 2.100l-3.200 2.100l.9-2.100z" fill="#e6e6e6"/><rect x="16" y="6.100" width="2.200" height="3.900" rx=".8" fill="#e6e6e6"/></svg>
    <div class="lb">AI小助手</div>
  </div>

  <div class="it" style="left:704px;width:60px">
    <svg style="left:21.300px;top:14px" width="17.500" height="17.500" viewBox="0 0 19 20" fill="#e2e2e2"><rect x="0.500" y="1" width="8" height="8.500"/><path d="M10 1h4.500a4 4 0 0 1 4 4v4.500H10z"/><path d="M12 3h2.500a2 2 0 0 1 2 2v2.500H12z" fill="#212121"/><rect x="0.500" y="11" width="8" height="8.500"/><rect x="10" y="11" width="8.500" height="8.500"/></svg>
    <div class="lb">应用</div>
  </div>

  <div class="it" style="left:851px;width:60px">
    <svg style="left:20px;top:14px" width="22" height="20" viewBox="0 0 22 20"><path d="M3 0.800h14.500V4H9.500v12h8v3.200H3a2 2 0 0 1-2-2V2.800a2 2 0 0 1 2-2z" fill="#e5472f"/><path d="M10.500 10h10M17 6.300L20.700 10L17 13.700" stroke="#e5472f" stroke-width="1.600" fill="none"/></svg>
    <div class="lb" style="color:#e5472f">离开会议</div>
  </div>
</div>

</body>
</html>
